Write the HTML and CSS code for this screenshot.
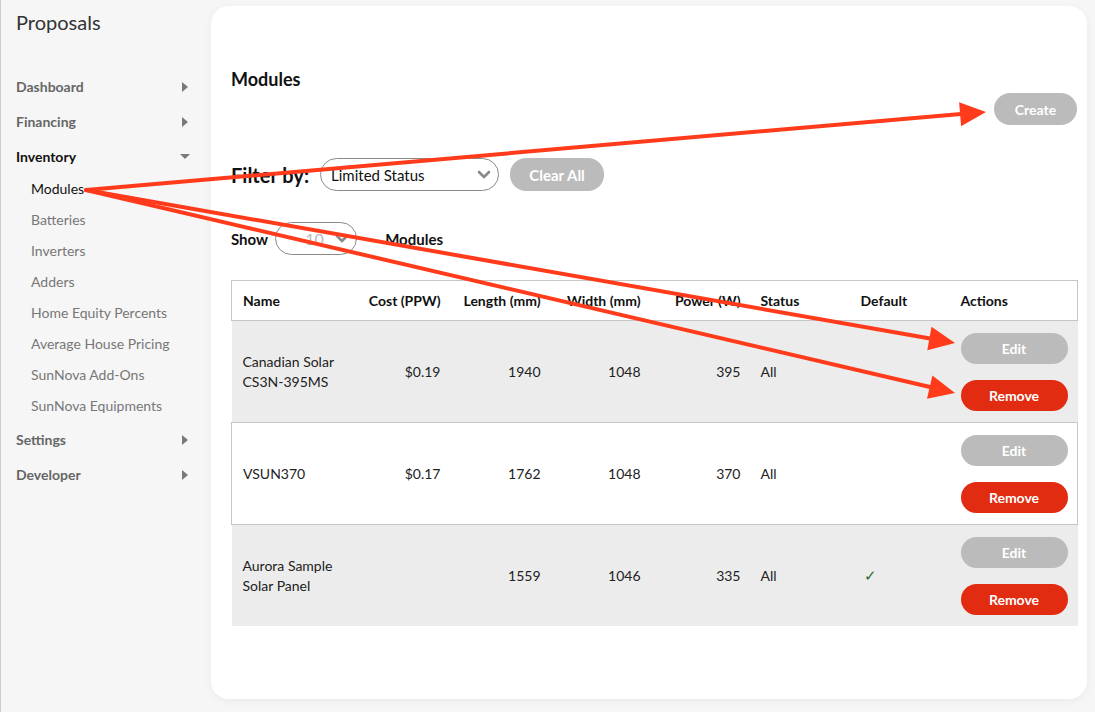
FILE: index.html
```html
<!DOCTYPE html>
<html lang="en">

<head>
  <meta charset="UTF-8">
  <meta name="viewport" content="width=device-width, initial-scale=1.0">
  <title>Proposals - Modules</title>
  <link rel="stylesheet" href="styles.css">
</head>

<body>
  <aside class="sidebar">
    <div class="brand">Proposals</div>

    <ul class="nav">
      <li class="navItem"><span>Dashboard</span><i class="tri"></i></li>
      <li class="navItem"><span>Financing</span><i class="tri"></i></li>
      <li class="navItem open"><span>Inventory</span><i class="tri down"></i></li>
      <li>
        <ul class="subNav">
          <li class="active">Modules</li>
          <li>Batteries</li>
          <li>Inverters</li>
          <li>Adders</li>
          <li>Home Equity Percents</li>
          <li>Average House Pricing</li>
          <li>SunNova Add-Ons</li>
          <li>SunNova Equipments</li>
        </ul>
      </li>
      <li class="navItem"><span>Settings</span><i class="tri"></i></li>
      <li class="navItem"><span>Developer</span><i class="tri"></i></li>
    </ul>
  </aside>

  <main class="card">
    <h2 class="pageTitle">Modules</h2>

    <div class="toolbar">
      <button class="btn grey createBtn">Create</button>
    </div>

    <div class="filterRow">
      <span class="filterLabel">Filter by:</span>
      <div class="select statusSelect">
        <span>Limited Status</span>
        <svg class="chev" width="14" height="9" viewBox="0 0 14 9"><polyline points="2,2 7,7 12,2" fill="none" stroke="#8a8a8a" stroke-width="2.6" stroke-linecap="round" stroke-linejoin="round"/></svg>
      </div>
      <button class="btn grey clearBtn">Clear All</button>
    </div>

    <div class="showRow">
      <span class="showLabel">Show</span>
      <div class="select countSelect">
        <span>10</span>
        <svg class="chev" width="14" height="9" viewBox="0 0 14 9"><polyline points="2,2 7,7 12,2" fill="none" stroke="#8a8a8a" stroke-width="2.6" stroke-linecap="round" stroke-linejoin="round"/></svg>
      </div>
      <span class="showLabel unitLabel">Modules</span>
    </div>

    <table class="modTable">
      <colgroup>
        <col style="width:119px">
        <col style="width:100px">
        <col style="width:100px">
        <col style="width:100px">
        <col style="width:100px">
        <col style="width:100px">
        <col style="width:100px">
        <col style="width:127px">
      </colgroup>
      <thead>
        <tr>
          <th class="name">Name</th>
          <th class="num">Cost (PPW)</th>
          <th class="num">Length (mm)</th>
          <th class="num">Width (mm)</th>
          <th class="num">Power (W)</th>
          <th>Status</th>
          <th>Default</th>
          <th>Actions</th>
        </tr>
      </thead>
      <tbody>
        <tr class="shade">
          <td class="name">Canadian Solar CS3N-395MS</td>
          <td class="num">$0.19</td>
          <td class="num">1940</td>
          <td class="num">1048</td>
          <td class="num">395</td>
          <td>All</td>
          <td></td>
          <td><div class="actions"><button class="btn grey">Edit</button><button class="btn red">Remove</button></div></td>
        </tr>
        <tr class="lined">
          <td class="name">VSUN370</td>
          <td class="num">$0.17</td>
          <td class="num">1762</td>
          <td class="num">1048</td>
          <td class="num">370</td>
          <td>All</td>
          <td></td>
          <td><div class="actions"><button class="btn grey">Edit</button><button class="btn red">Remove</button></div></td>
        </tr>
        <tr class="shade">
          <td class="name">Aurora Sample Solar Panel</td>
          <td class="num"></td>
          <td class="num">1559</td>
          <td class="num">1046</td>
          <td class="num">335</td>
          <td>All</td>
          <td><span class="check">&#10003;</span></td>
          <td><div class="actions"><button class="btn grey">Edit</button><button class="btn red">Remove</button></div></td>
        </tr>
      </tbody>
    </table>
  </main>

  <!-- annotation arrows -->
  <svg class="arrows" width="1095" height="712" viewBox="0 0 1095 712">
    <g stroke="#ff3b1c" stroke-width="4" stroke-linecap="round">
      <line x1="86" y1="190" x2="961" y2="114"/>
      <line x1="86" y1="190" x2="930" y2="338.5"/>
      <line x1="86" y1="190" x2="930" y2="387"/>
    </g>
    <g fill="#ff3b1c">
      <polygon points="986,112 961.1,126.2 959.1,102.3"/>
      <polygon points="955,343 927.3,350.3 931.5,326.7"/>
      <polygon points="955,393 927,398.8 932.4,375.4"/>
    </g>
  </svg>
</body>

</html>
```

FILE: styles.css
```css
body {
  margin: 0;
  position: relative;
  display: flex;
  align-items: flex-start;
  width: 1095px;
  height: 712px;
  overflow: hidden;
  background-color: #f6f6f6;
  font-family: Lato, "Open Sans", sans-serif;
  color: #111;
}

/* sidebar */
.sidebar {
  box-sizing: border-box;
  width: 211px;
  height: 712px;
  flex-shrink: 0;
  border-left: 1px solid #c9cfd8;
}

.brand {
  padding: 10px 0 0 15px;
  font-size: 20px;
  line-height: 24px;
  color: #333;
}

.nav {
  list-style: none;
  margin: 35px 0 0;
  padding: 0;
}

.navItem {
  display: flex;
  align-items: center;
  justify-content: space-between;
  height: 35px;
  padding: 0 23px 0 15px;
  font-size: 14px;
  font-weight: bold;
  color: #666;
}

.navItem.open {
  color: #111;
}

.tri {
  width: 0;
  height: 0;
  border-left: 6px solid #7a7a7a;
  border-top: 5px solid transparent;
  border-bottom: 5px solid transparent;
}

.tri.down {
  margin-right: -2px;
  border-top: 5px solid #7a7a7a;
  border-left: 5px solid transparent;
  border-right: 5px solid transparent;
  border-bottom: 0;
}

.subNav {
  list-style: none;
  margin: 0;
  padding: 0;
}

.subNav li {
  height: 31px;
  line-height: 30px;
  padding-left: 30px;
  font-size: 14px;
  color: #777;
}

.subNav li.active {
  color: #111;
}

/* main card */
.card {
  box-sizing: border-box;
  width: 876px;
  height: 693px;
  margin-top: 6px;
  padding: 61px 10px 0 20px;
  background-color: #fff;
  border-radius: 18px;
  box-shadow: 0 2px 8px rgba(0, 0, 0, 0.05);
}

.pageTitle {
  margin: 0;
  font-size: 18px;
  line-height: 24px;
  color: #111;
}

.toolbar {
  display: flex;
  justify-content: flex-end;
  margin-top: 2px;
}

.btn {
  border: 0;
  border-radius: 16px;
  font-family: Lato, "Open Sans", sans-serif;
  font-weight: bold;
  font-size: 14px;
  color: #fff;
  padding: 0;
}

.btn.grey {
  background-color: #bbbbbb;
}

.btn.red {
  background-color: #e22c12;
}

.createBtn {
  width: 83px;
  height: 32px;
}

.filterRow {
  display: flex;
  align-items: center;
  margin-top: 33px;
  height: 33px;
}

.filterLabel {
  font-size: 20px;
  font-weight: bold;
  margin-right: 11px;
}

.select {
  box-sizing: border-box;
  display: flex;
  align-items: center;
  justify-content: space-between;
  height: 33px;
  border: 1px solid #8a8a8a;
  border-radius: 17px;
  font-size: 15px;
}

.statusSelect {
  width: 179px;
  padding: 0 7px 0 10px;
  color: #111;
}

.clearBtn {
  width: 94px;
  height: 33px;
  margin-left: 11px;
  font-size: 15px;
}

.showRow {
  display: flex;
  align-items: center;
  margin-top: 31px;
  height: 33px;
}

.showLabel {
  font-size: 15px;
  font-weight: bold;
}

.countSelect {
  width: 82px;
  margin-left: 7px;
  padding: 0 7px 0 29px;
  color: #bbb;
  font-size: 16px;
}

.unitLabel {
  margin-left: 28px;
}

/* table */
.modTable {
  width: 846px;
  margin-top: 25px;
  table-layout: fixed;
  border-collapse: collapse;
  font-size: 14px;
  color: #222;
}

.modTable th {
  height: 39px;
  padding: 0 10px;
  text-align: left;
  font-weight: bold;
  color: #111;
}

.modTable thead tr,
.modTable tr.lined {
  border: 1px solid #c6c6c6;
}

.modTable td {
  height: 101px;
  padding: 0 10px;
  line-height: 20px;
  vertical-align: middle;
}

.modTable .name {
  padding-left: 11px;
}

.modTable .num {
  text-align: right;
}

.modTable tr.shade {
  background-color: #ececec;
}

.actions {
  display: flex;
  flex-direction: column;
  gap: 16px;
}

.actions .btn {
  width: 107px;
  height: 31px;
}

.check {
  color: #2d6a2d;
  font-size: 15px;
  padding-left: 3px;
}

.arrows {
  position: absolute;
  top: 0;
  left: 0;
  pointer-events: none;
}
```
